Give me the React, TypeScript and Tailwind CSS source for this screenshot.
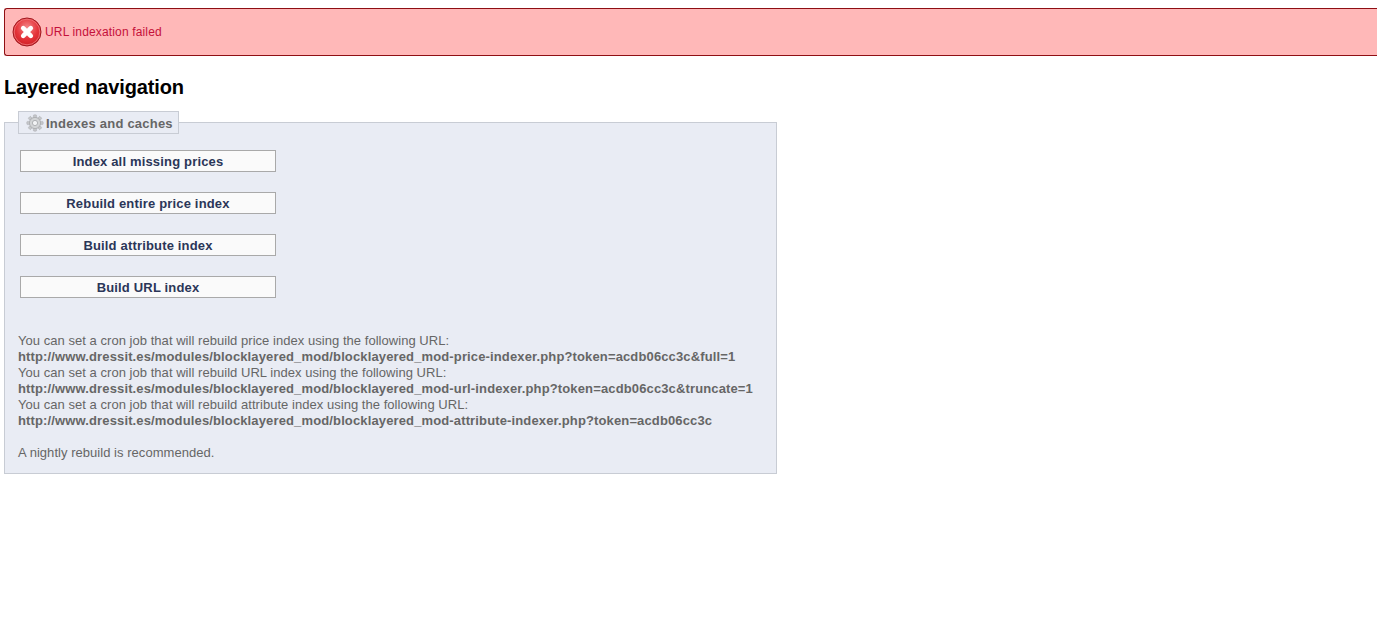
const sans = "font-['Liberation_Sans',Arial,sans-serif]";

function ErrorIcon() {
  return (
    <svg width="30" height="30" viewBox="0 0 30 30" className="shrink-0">
      <defs>
        <radialGradient id="errorFill" cx="0.5" cy="0.35" r="0.7">
          <stop offset="0" stopColor="#f4888a" />
          <stop offset="0.55" stopColor="#e5343a" />
          <stop offset="1" stopColor="#c91c22" />
        </radialGradient>
      </defs>
      <circle cx="15" cy="15" r="14" fill="url(#errorFill)" stroke="#9e1a20" strokeWidth="1" />
      <circle cx="15" cy="15" r="12.8" fill="none" stroke="#f0787c" strokeWidth="0.8" />
      <path d="M11.2 11.2 L18.8 18.8 M18.8 11.2 L11.2 18.8" stroke="#ffffff" strokeWidth="4.6" strokeLinecap="round" />
    </svg>
  );
}

function GearIcon() {
  const teeth = [0, 45, 90, 135, 180, 225, 270, 315];
  return (
    <svg width="18" height="18" viewBox="0 0 18 18" className="shrink-0">
      {teeth.map((a) => (
        <rect key={a} x="7.4" y="0.8" width="3.2" height="4" rx="0.8" fill="#c4c6c9" stroke="#a3a5a8" strokeWidth="0.4" transform={`rotate(${a} 9 9)`} />
      ))}
      <circle cx="9" cy="9" r="5.6" fill="#d2d4d6" stroke="#a3a5a8" strokeWidth="0.7" />
      <circle cx="9" cy="9" r="2.6" fill="#f2f3f5" stroke="#9a9c9f" strokeWidth="0.7" />
    </svg>
  );
}

function ActionButton({ label }: { label: string }) {
  return (
    <button className="block w-[256px] h-[22px] pt-[1px] border border-[#a9a9a9] bg-[#fafafa] text-[13px] leading-[20px] tracking-[0.17px] font-bold text-[#2b3658] text-center">
      {label}
    </button>
  );
}

export default function App() {
  return (
    <div className={`${sans} min-h-[630px] bg-white pt-2 pl-1 overflow-hidden`}>
      <div className="h-[48px] flex items-center gap-[3px] border border-r-0 border-[#8f0f14] rounded-l-[3px] bg-[#ffb8b8] pl-[7px] text-[12px] tracking-[0.15px] text-[#c5103a]">
        <ErrorIcon />
        <span>URL indexation failed</span>
      </div>

      <h2 className="mt-[20px] text-[20px] leading-[23px] tracking-[-0.13px] font-bold text-black">Layered navigation</h2>

      <fieldset className="mt-[12px] w-[773px] h-[363px] border border-[#c8ccd4] bg-[#e9ecf4] pl-[13px] pr-0">
        <legend className="h-[23px] w-[161px] flex items-center gap-[2px] border border-[#c8ccd4] bg-[#e9ecf4] pl-[7px] text-[13px] tracking-[0.22px] font-bold text-[#666666]">
          <GearIcon />
          <span className="pt-[2px]">Indexes and caches</span>
        </legend>

        <div className="mt-[16px] ml-[2px] flex flex-col gap-[20px]">
          <ActionButton label="Index all missing prices" />
          <ActionButton label="Rebuild entire price index" />
          <ActionButton label="Build attribute index" />
          <ActionButton label="Build URL index" />
        </div>

        <div className="mt-[35px] text-[13px] leading-[16px] tracking-[0.04px] text-[#666666]">
          <p>You can set a cron job that will rebuild price index using the following URL:</p>
          <p className="font-bold tracking-[0.135px]">http://www.dressit.es/modules/blocklayered_mod/blocklayered_mod-price-indexer.php?token=acdb06cc3c&amp;full=1</p>
          <p>You can set a cron job that will rebuild URL index using the following URL:</p>
          <p className="font-bold tracking-[0.135px]">http://www.dressit.es/modules/blocklayered_mod/blocklayered_mod-url-indexer.php?token=acdb06cc3c&amp;truncate=1</p>
          <p>You can set a cron job that will rebuild attribute index using the following URL:</p>
          <p className="font-bold tracking-[0.135px]">http://www.dressit.es/modules/blocklayered_mod/blocklayered_mod-attribute-indexer.php?token=acdb06cc3c</p>
          <p className="mt-[16px]">A nightly rebuild is recommended.</p>
        </div>
      </fieldset>
    </div>
  );
}
